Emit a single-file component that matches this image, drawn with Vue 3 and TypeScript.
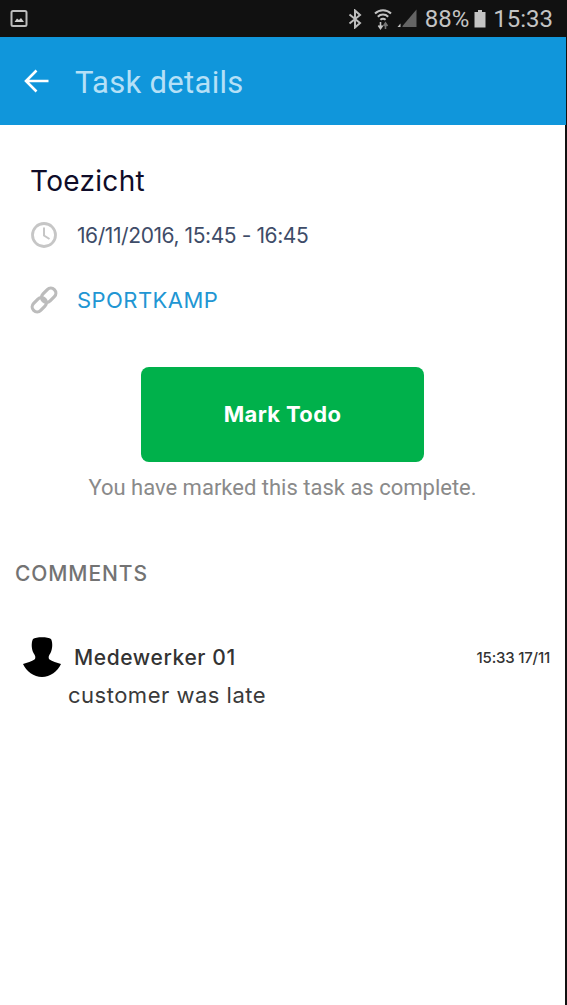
<script setup lang="ts">
const comment = {
  author: 'Medewerker 01',
  time: '15:33 17/11',
  text: 'customer was late'
}
</script>

<template>
  <div class="screen">
    <div class="statusBar">
      <svg class="galleryIcon" width="18" height="20" viewBox="0 0 18 20">
        <rect x="1.5" y="2" width="15" height="15" rx="1.5" fill="none" stroke="#bdbdbd" stroke-width="2" />
        <path d="M4.5 13 L7 9.5 L9 11 L11 9 L14 13 Z" fill="#d0d0d0" />
      </svg>
      <div class="statusRight">
        <svg class="btIcon" width="14" height="20" viewBox="0 0 14 20">
          <path d="M1.5 5.5 L12 14 L7 18.5 V1.5 L12 6 L1.5 14.5" fill="none" stroke="#bdbdbd" stroke-width="2" />
        </svg>
        <svg class="wifiIcon" width="18" height="22" viewBox="0 0 18 22">
          <path d="M1 5.5 A11.5 11.5 0 0 1 17 5.5" fill="none" stroke="#c4c4c4" stroke-width="2" />
          <path d="M3.8 8.7 A7.5 7.5 0 0 1 14.2 8.7" fill="none" stroke="#c4c4c4" stroke-width="2" />
          <path d="M6.4 11.8 A4 4 0 0 1 11.6 11.8" fill="none" stroke="#c4c4c4" stroke-width="2" />
          <path d="M6.5 14 V20 M4.4 17.5 L6.5 20.5 L8.6 17.5" fill="none" stroke="#c4c4c4" stroke-width="1.6" />
          <path d="M11.5 21 V15.5 M9.5 18 L11.5 15 L13.5 18" fill="none" stroke="#777" stroke-width="1.6" />
        </svg>
        <svg class="signalIcon" width="20" height="19" viewBox="0 0 20 19">
          <path d="M19.5 0.5 V18 H5.5 V17 Z" fill="#646464" />
          <path d="M0.5 18 L3.5 14.5 V18 Z" fill="#c4c4c4" />
        </svg>
        <span class="battPct">88%</span>
        <svg class="battIcon" width="12" height="19" viewBox="0 0 12 19">
          <path d="M4 1 H8 V3 H11.5 V18.5 H0.5 V3 H4 Z" fill="#c4c4c4" />
        </svg>
        <span class="clock">15:33</span>
      </div>
    </div>

    <header class="appBar">
      <svg class="backIcon" width="26" height="26" viewBox="0 0 26 26">
        <path d="M24.5 13 H2.5 M12.5 2.5 L2 13 L12.5 23.5" fill="none" stroke="#fff" stroke-width="2.6" />
      </svg>
      <h1 class="title">Task details</h1>
    </header>

    <main class="content">
      <section class="task">
        <h2 class="taskName">Toezicht</h2>
        <div class="infoRow">
          <svg class="infoIcon" width="28" height="28" viewBox="0 0 28 28">
            <circle cx="14" cy="14" r="11.5" fill="none" stroke="#c6c6c6" stroke-width="2.8" />
            <path d="M14 6.5 V14.5 L19.5 18" fill="none" stroke="#c6c6c6" stroke-width="2" />
          </svg>
          <span class="dateText">16/11/2016, 15:45 - 16:45</span>
        </div>
        <div class="infoRow">
          <svg class="infoIcon" width="28" height="28" viewBox="0 0 28 28">
            <g fill="none" stroke="#bcbcbc" stroke-width="3.2">
              <rect x="10.7" y="4.3" width="16" height="10" rx="5" transform="rotate(-45 18.7 9.3)" />
              <rect x="1.3" y="13.7" width="16" height="10" rx="5" transform="rotate(-45 9.3 18.7)" />
            </g>
          </svg>
          <span class="linkText">SPORTKAMP</span>
        </div>
      </section>

      <div class="action">
        <button class="markBtn">Mark Todo</button>
        <p class="hint">You have marked this task as complete.</p>
      </div>

      <h3 class="commentsTitle">COMMENTS</h3>

      <div class="comment">
        <div class="commentHead">
          <svg class="avatar" width="40" height="42" viewBox="0 0 40 42">
            <path d="M11 3 C14 0.5 26 0.5 29 3 C31 7 30.5 13 28.5 17 C26.5 20 26 22 27.5 23.5 C30 25.5 35 26.5 39 28 C36 35 28 41 20 41 C12 41 4 35 1 28 C5 26.5 10 25.5 12.5 23.5 C14 22 13.5 20 11.5 17 C9.5 13 9 7 11 3 Z" fill="#000" />
          </svg>
          <span class="author">{{ comment.author }}</span>
          <span class="time">{{ comment.time }}</span>
        </div>
        <p class="commentText">{{ comment.text }}</p>
      </div>
    </main>
  </div>
</template>

<style>
html,
body {
  margin: 0;
  background: #fff;
}
</style>

<style scoped>
.screen {
  width: 566px;
  height: 1005px;
  background: #fff;
  border-right: 1px solid #111;
  overflow: hidden;
  font-family: "Inter", "Open Sans", sans-serif;
  display: flex;
  flex-direction: column;
}

.statusBar {
  height: 37px;
  flex: none;
  background: #111;
  display: flex;
  align-items: center;
  justify-content: space-between;
  padding: 0 13px 0 10px;
  box-sizing: border-box;
}

.galleryIcon {
  display: block;
}

.statusRight {
  display: flex;
  align-items: center;
  color: #c4c4c4;
  font-family: "Roboto", sans-serif;
  font-size: 24px;
}

.btIcon {
  margin-right: 12px;
}

.wifiIcon {
  margin-right: 5px;
}

.signalIcon {
  margin-right: 8px;
}

.battIcon {
  margin: 0 7px 0 5px;
}

.appBar {
  height: 88px;
  flex: none;
  background: #1096db;
  display: flex;
  align-items: center;
  padding-left: 24px;
  box-sizing: border-box;
}

.title {
  margin: 2px 0 0 25px;
  font-family: "Roboto", sans-serif;
  font-size: 31px;
  font-weight: 400;
  color: #b5e0f7;
  letter-spacing: 0.3px;
}

.content {
  flex: 1;
  display: flex;
  flex-direction: column;
  border-right: 1px solid #111;
}

.task {
  padding: 38px 0 0 30px;
}

.taskName {
  margin: 0;
  font-size: 28px;
  line-height: 36px;
  font-weight: 400;
  letter-spacing: 0.3px;
  color: #0f0c29;
}

.infoRow {
  display: flex;
  align-items: center;
  gap: 19px;
  height: 40px;
}

.task .infoRow:nth-child(2) {
  margin-top: 16px;
}

.task .infoRow:nth-child(3) {
  margin-top: 25px;
}

.infoIcon {
  flex: none;
}

.dateText {
  font-size: 21px;
  letter-spacing: -0.42px;
  color: #3e4c68;
}

.linkText {
  font-size: 22px;
  letter-spacing: 0.45px;
  color: #2196d3;
}

.action {
  display: flex;
  flex-direction: column;
  align-items: center;
  margin-top: 47px;
}

.markBtn {
  width: 283px;
  height: 95px;
  padding: 0 0 2px;
  border: none;
  border-radius: 8px;
  background: #00b14b;
  color: #fff;
  font-family: inherit;
  font-size: 22px;
  font-weight: 700;
  letter-spacing: 0.35px;
}

.hint {
  margin: 12px 0 0;
  font-family: "Roboto", sans-serif;
  font-size: 22px;
  line-height: 28px;
  color: #8a8a8a;
}

.commentsTitle {
  margin: 58px 0 0 15px;
  font-size: 21px;
  line-height: 28px;
  font-weight: 500;
  letter-spacing: 0.9px;
  color: #737373;
}

.comment {
  margin-top: 48px;
  padding: 0 15px 0 22px;
}

.commentHead {
  display: flex;
  align-items: center;
}

.author {
  margin-left: 12px;
  font-size: 21px;
  font-weight: 500;
  letter-spacing: 0.6px;
  color: #333;
}

.time {
  margin-left: auto;
  font-size: 15px;
  font-weight: 500;
  letter-spacing: -0.2px;
  color: #333;
}

.commentText {
  margin: 2px 0 0 46px;
  font-size: 22px;
  line-height: 30px;
  letter-spacing: 0.5px;
  color: #3a3a3a;
}
</style>
